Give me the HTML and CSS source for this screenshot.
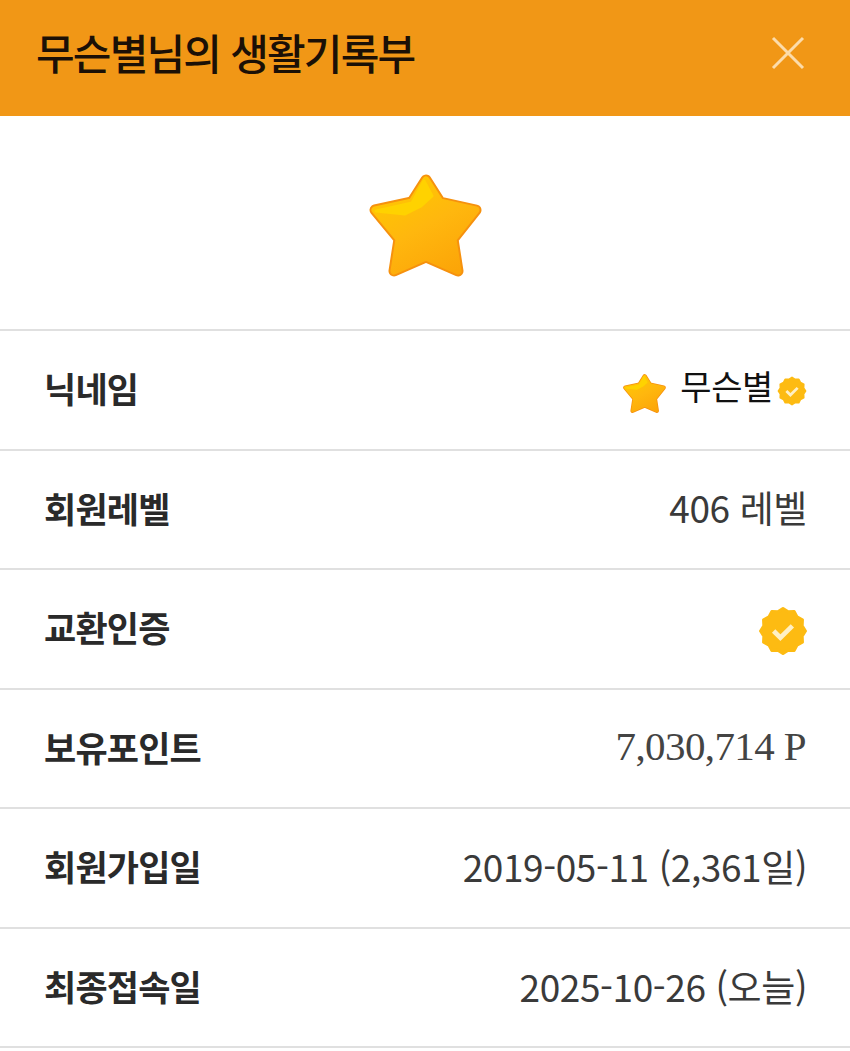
FILE: index.html
```html
<!DOCTYPE html>
<html lang="ko">
<head>
    <meta charset="UTF-8">
    <meta name="viewport" content="width=device-width, initial-scale=1.0">
    <title>생활기록부</title>
    <link rel="stylesheet" href="styles.css">
</head>
<body>
    <svg class="defs" width="0" height="0">
        <defs>
            <linearGradient id="star-fill" x1="0.2" y1="0" x2="0.8" y2="1">
                <stop offset="0" stop-color="#ffc800"/>
                <stop offset="0.5" stop-color="#ffb70e"/>
                <stop offset="1" stop-color="#fca508"/>
            </linearGradient>
            <symbol id="star" viewBox="0 0 113 107">
                <path d="M57 8 L71 30 L107 38 L84 67 L89 99 L57 85 L25 99 L30 67 L6 38 L43 30 Z" fill="#f6910e" stroke="#f6910e" stroke-width="11" stroke-linejoin="round"/>
                <path d="M57 8 L71 30 L107 38 L84 67 L89 99 L57 85 L25 99 L30 67 L6 38 L43 30 Z" fill="url(#star-fill)" stroke="url(#star-fill)" stroke-width="7" stroke-linejoin="round"/>
                <path d="M55 9 L63 24 L52 34 L36 42 L7 39 L43 31 Z" fill="#ffd200" stroke="#ffd200" stroke-width="3" stroke-linejoin="round"/>
            </symbol>
            <symbol id="badge" viewBox="0 0 48 48">
                <polygon points="24,2.5 28.92,5.65 34.75,5.38 37.44,10.56 42.62,13.25 42.35,19.08 45.5,24 42.35,28.92 42.62,34.75 37.44,37.44 34.75,42.62 28.92,42.35 24,45.5 19.08,42.35 13.25,42.62 10.56,37.44 5.38,34.75 5.65,28.92 2.5,24 5.65,19.08 5.38,13.25 10.56,10.56 13.25,5.38 19.08,5.65" fill="#fdbb12" stroke="#fdbb12" stroke-width="3" stroke-linejoin="round"/>
                <path d="M15 24 L21.5 30.5 L33 19" fill="none" stroke="#fff0c4" stroke-width="4.5"/>
            </symbol>
        </defs>
    </svg>

    <header class="top-bar">
        <h1 class="top-title">무슨별님의 생활기록부</h1>
        <svg class="close-icon" viewBox="0 0 34 34">
            <path d="M2 2 L32 32 M32 2 L2 32" stroke="#fcdcaa" stroke-width="3" fill="none"/>
        </svg>
    </header>

    <div class="hero">
        <svg class="hero-star"><use href="#star"/></svg>
    </div>

    <div class="info-list">
        <div class="info-row">
            <span class="info-label">닉네임</span>
            <span class="info-value nick">
                <svg class="nick-star"><use href="#star"/></svg>
                <span class="nick-name">무슨별</span>
                <svg class="nick-badge"><use href="#badge"/></svg>
            </span>
        </div>
        <div class="info-row">
            <span class="info-label">회원레벨</span>
            <span class="info-value">406 레벨</span>
        </div>
        <div class="info-row">
            <span class="info-label">교환인증</span>
            <svg class="big-badge"><use href="#badge"/></svg>
        </div>
        <div class="info-row">
            <span class="info-label">보유포인트</span>
            <span class="info-value points">7,030,714 P</span>
        </div>
        <div class="info-row">
            <span class="info-label">회원가입일</span>
            <span class="info-value">2019-05-11 (2,361일)</span>
        </div>
        <div class="info-row">
            <span class="info-label">최종접속일</span>
            <span class="info-value">2025-10-26 (오늘)</span>
        </div>
    </div>
</body>
</html>
```

FILE: styles.css
```css
body {
    margin: 0;
    background: #fff;
    font-family: "Noto Sans CJK KR", "Noto Sans", sans-serif;
    overflow: hidden;
}
.defs {
    display: block;
}
.top-bar {
    display: flex;
    align-items: center;
    justify-content: space-between;
    height: 116px;
    padding: 0 45px 10px 36px;
    box-sizing: border-box;
    background-color: #f19716;
}
.top-title {
    margin: 0 0 4px;
    font-size: 42px;
    font-weight: 500;
    letter-spacing: -1.8px;
    color: #1b1006;
}
.close-icon {
    width: 34px;
    height: 34px;
}
.hero {
    display: flex;
    justify-content: center;
    align-items: center;
    height: 215px;
    padding-top: 6px;
    box-sizing: border-box;
    border-bottom: 2px solid #e0e0e0;
}
.hero-star {
    width: 113px;
    height: 107px;
}
.info-row {
    display: flex;
    align-items: center;
    justify-content: space-between;
    height: 119.55px;
    padding: 0 44px 4px;
    box-sizing: border-box;
    border-bottom: 2px solid #e0e0e0;
}
.info-label {
    font-size: 35px;
    font-weight: 700;
    letter-spacing: -0.8px;
    color: #2a2a2a;
}
.info-value {
    margin-right: -1px;
    font-size: 37px;
    letter-spacing: -0.4px;
    color: #3a3a3a;
}
.nick {
    display: flex;
    align-items: center;
    margin-right: 0;
    font-size: 34px;
}
.nick-star {
    width: 43px;
    height: 41px;
    margin: 12px 14px 0 0;
}
.nick-name {
    margin-top: -4px;
    color: #111;
}
.nick-badge {
    width: 30px;
    height: 30px;
    margin: 6px -1px 0 4px;
}
.big-badge {
    width: 50px;
    height: 50px;
    margin: 9px -2px 0 0;
}
.points {
    margin-right: 0;
    font-family: "Liberation Serif", serif;
    font-size: 41px;
    letter-spacing: -0.6px;
    color: #444;
}
```
